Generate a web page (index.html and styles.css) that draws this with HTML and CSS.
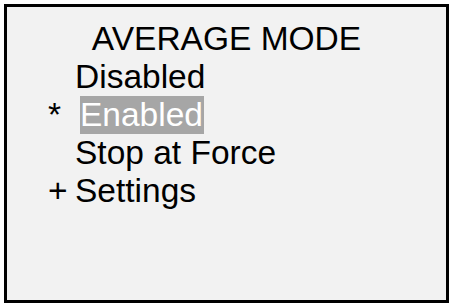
FILE: index.html
```html
<!DOCTYPE html>
<html lang="en">
<head>
  <meta charset="UTF-8" />
  <title>Average Mode</title>
  <link rel="stylesheet" href="styles.css">
</head>
<body>
  <div class="screen">
    <div class="title">AVERAGE MODE</div>
    <ul class="menu">
      <li><span class="mark"></span><span class="label">Disabled</span></li>
      <li><span class="mark">*</span><span class="label selected">Enabled</span></li>
      <li><span class="mark"></span><span class="label">Stop at Force</span></li>
      <li><span class="mark">+</span><span class="label">Settings</span></li>
    </ul>
  </div>
</body>
</html>
```

FILE: styles.css
```css
* {
  margin: 0;
  padding: 0;
  box-sizing: border-box;
}
body {
  background: #fff;
  font-family: "Liberation Sans", Arial, sans-serif;
  font-size: 33.5px;
  line-height: 38px;
  color: #000;
}

/* display frame */
.screen {
  margin: 4px;
  width: 445px;
  height: 299px;
  border: 3px solid #000;
  background: #f2f2f2;
  padding: 13px 0 0 41px;
}
.title {
  text-align: center;
  margin-left: -41px;
}

.menu {
  list-style: none;
}
.menu li {
  display: flex;
  height: 38px;
}
.mark {
  width: 27px;
  flex-shrink: 0;
}
.label {
  white-space: nowrap;
}
.selected {
  margin-left: 5px;
  padding-right: 1px;
  background: #a6a6a6;
  color: #fff;
}
```
